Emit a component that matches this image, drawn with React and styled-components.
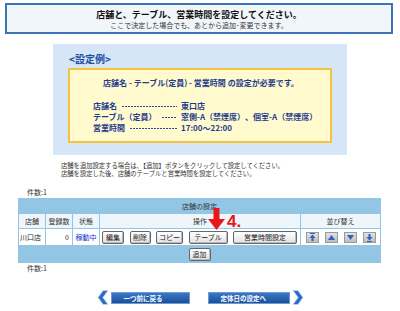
import styled, { createGlobalStyle } from 'styled-components';

const GlobalStyle = createGlobalStyle`
  body {
    margin: 0;
    background: #fff;
    font-family: "Noto Sans CJK JP", "Noto Sans", sans-serif;
    color: #222;
  }
`;

const Page = styled.div`
  width: 400px;
  height: 311px;
  overflow: hidden;
`;

const Header = styled.div`
  margin: 3px 7px 0 5px;
  height: 31px;
  box-sizing: border-box;
  border: 2px solid #3b73b9;
  background: #f1f6fb;
  padding-top: 4px;
  text-align: center;
`;

const HeaderTitle = styled.div`
  font-size: 9px;
  line-height: 11px;
  font-weight: bold;
  color: #111;
`;

const HeaderSub = styled.div`
  margin-top: 1px;
  font-size: 7px;
  line-height: 9px;
  color: #333;
`;

const ExamplePanel = styled.div`
  margin: 10px 0 0 53px;
  width: 294px;
  height: 111px;
  box-sizing: border-box;
  background: #d6e6f6;
  padding: 9px 15px 0;
`;

const ExampleLabel = styled.div`
  padding-left: 1px;
  font-size: 10px;
  line-height: 12px;
  font-weight: bold;
  color: #1d4fa1;
`;

const YellowBox = styled.div`
  margin-top: 3px;
  height: 75px;
  box-sizing: border-box;
  border: 2px solid #f5c33b;
  background: #fffbcf;
  padding: 8px 0 0 23px;
  color: #1f3c8c;
  font-weight: bold;
  font-size: 8px;
`;

const Lead = styled.div`
  margin-left: -21px;
  text-align: center;
  line-height: 10px;
`;

const SpecList = styled.div`
  margin-top: 12px;
`;

const SpecRow = styled.div`
  display: flex;
  align-items: center;
  line-height: 11px;
  white-space: nowrap;
`;

const SpecLabel = styled.div`
  display: flex;
  align-items: center;
  width: 84px;
  margin-right: 4px;
`;

const Leader = styled.span`
  flex: 1;
  height: 1px;
  margin: 1px 0 0 5px;
  background: repeating-linear-gradient(90deg, #2a4896 0 2px, transparent 2px 3px);
`;

const Notes = styled.div`
  margin: 7px 0 0 61px;
  font-size: 6.3px;
  line-height: 8px;
  color: #333;
`;

const Count = styled.div`
  margin: ${(p) => (p.first ? '9px' : '0')} 0 0 27px;
  font-size: 7px;
  line-height: 10px;
  color: #333;
`;

const TableWrap = styled.div`
  position: relative;
  margin: 1px 0 0 18px;
  width: 363px;
`;

const Grid = styled.table`
  width: 363px;
  table-layout: fixed;
  border-collapse: separate;
  border-spacing: 1px;
  background: #92c6e4;
  font-size: 7px;
  color: #333;
`;

const Caption = styled.td`
  height: 14px;
  padding: 0;
  text-align: center;
  color: #333;
`;

const Head = styled.td`
  height: 14px;
  padding: 0;
  background: #eef6fc;
  text-align: center;
`;

const Cell = styled.td`
  height: 16px;
  padding: 0 ${(p) => (p.right ? '3px' : '1px')};
  background: #fff;
  text-align: ${(p) => (p.right ? 'right' : p.center ? 'center' : 'left')};
  color: ${(p) => (p.status ? '#1a2fd0' : '#222')};
`;

const Foot = styled.td`
  height: 16px;
  padding: 0;
  text-align: center;
`;

const Actions = styled.div`
  display: flex;
  align-items: center;
  gap: 5.5px;
  padding-left: 1px;
`;

const Btn = styled.button`
  width: ${(p) => p.w}px;
  height: 13px;
  padding: 0;
  box-sizing: border-box;
  border: 1px solid #666;
  border-radius: 2px;
  background: linear-gradient(#ffffff, #e2e2e2);
  box-shadow: inset -1px -1px 0 #bbb;
  font-family: inherit;
  font-size: 7px;
  line-height: 11px;
  color: #222;
`;

const SortGroup = styled.div`
  display: flex;
  justify-content: center;
  gap: 6px;
`;

const SortBtn = styled.div`
  width: 13px;
  height: 11px;
  box-sizing: border-box;
  border: 1px solid #9a9a9a;
  background: linear-gradient(#e2e2e2, #bdbdbd);
  display: flex;
  align-items: center;
  justify-content: center;
`;

const Marker = styled.svg`
  position: absolute;
  left: 190px;
  top: 10px;
`;

const StepNo = styled.div`
  position: absolute;
  left: 209px;
  top: 15px;
  font-family: "Liberation Sans", Arial, sans-serif;
  font-size: 17px;
  line-height: 17px;
  font-weight: bold;
  color: #e8161b;
`;

const Nav = styled.div`
  margin-top: 17px;
  display: flex;
  justify-content: center;
  gap: 18px;
`;

const NavButton = styled.div`
  display: flex;
  align-items: center;
  gap: 2px;
`;

const NavBar = styled.div`
  width: ${(p) => p.w}px;
  height: 12px;
  box-sizing: border-box;
  border: 1px solid #6d9ad6;
  background: linear-gradient(#3a78c8, #1a5099);
  color: #fff;
  font-size: 6.5px;
  font-weight: bold;
  line-height: 10px;
  padding-left: ${(p) => p.pad}px;
`;

const Chevron = ({ dir }) => (
  <svg width="12" height="15" viewBox="0 0 12 15">
    <polygon
      points={dir === 'left' ? '11,0.5 6,7.5 11,14.5 6,14.5 1,7.5 6,0.5' : '1,0.5 6,7.5 1,14.5 6,14.5 11,7.5 6,0.5'}
      fill="#2e6cc4"
      stroke="#bcd4f0"
      strokeWidth="1"
      strokeLinejoin="round"
    />
  </svg>
);

const SortIcon = ({ kind }) => {
  const c = '#2d62c0';
  if (kind === 'up') return <svg width="7" height="5"><polygon points="3.5,0 7,5 0,5" fill={c} /></svg>;
  if (kind === 'down') return <svg width="7" height="5"><polygon points="0,0 7,0 3.5,5" fill={c} /></svg>;
  const top = kind === 'top';
  return (
    <svg width="7" height="9" viewBox="0 0 7 9">
      <rect x="1" y={top ? 0 : 8} width="5" height="1" fill={c} />
      <polygon points={top ? '3.5,1.5 6.5,5 0.5,5' : '0.5,4 6.5,4 3.5,7.5'} fill={c} />
      <rect x="2.5" y={top ? 5 : 1} width="2" height="3" fill={c} />
    </svg>
  );
};

export default function App() {
  return (
    <Page>
      <GlobalStyle />
      <Header>
        <HeaderTitle>店舗と、テーブル、営業時間を設定してください。</HeaderTitle>
        <HeaderSub>ここで決定した場合でも、あとから追加･変更できます。</HeaderSub>
      </Header>

      <ExamplePanel>
        <ExampleLabel>&lt;設定例&gt;</ExampleLabel>
        <YellowBox>
          <Lead>店舗名 - テーブル(定員) - 営業時間 の設定が必要です。</Lead>
          <SpecList>
            <SpecRow>
              <SpecLabel>店舗名<Leader /></SpecLabel>
              東口店
            </SpecRow>
            <SpecRow>
              <SpecLabel>テーブル（定員）<Leader /></SpecLabel>
              窓側-A（禁煙席）、個室-A（禁煙席）
            </SpecRow>
            <SpecRow>
              <SpecLabel>営業時間<Leader /></SpecLabel>
              17:00～22:00
            </SpecRow>
          </SpecList>
        </YellowBox>
      </ExamplePanel>

      <Notes>
        店舗を追加設定する場合は、【追加】ボタンをクリックして設定してください。
        <br />
        店舗を設定した後、店舗のテーブルと営業時間を設定してください。
      </Notes>

      <Count first>件数:1</Count>

      <TableWrap>
        <Grid>
          <colgroup>
            <col style={{ width: 26 }} />
            <col style={{ width: 26 }} />
            <col style={{ width: 26 }} />
            <col style={{ width: 200 }} />
            <col style={{ width: 79 }} />
          </colgroup>
          <tbody>
            <tr>
              <Caption colSpan={5}>店舗の設定</Caption>
            </tr>
            <tr>
              <Head>店舗</Head>
              <Head>登録数</Head>
              <Head>状態</Head>
              <Head>操作</Head>
              <Head>並び替え</Head>
            </tr>
            <tr>
              <Cell>川口店</Cell>
              <Cell right>0</Cell>
              <Cell center status>稼動中</Cell>
              <Cell>
                <Actions>
                  <Btn w={22}>編集</Btn>
                  <Btn w={21}>削除</Btn>
                  <Btn w={27}>コピー</Btn>
                  <Btn w={39}>テーブル</Btn>
                  <Btn w={64}>営業時間設定</Btn>
                </Actions>
              </Cell>
              <Cell>
                <SortGroup>
                  <SortBtn><SortIcon kind="top" /></SortBtn>
                  <SortBtn><SortIcon kind="up" /></SortBtn>
                  <SortBtn><SortIcon kind="down" /></SortBtn>
                  <SortBtn><SortIcon kind="bottom" /></SortBtn>
                </SortGroup>
              </Cell>
            </tr>
            <tr>
              <Foot colSpan={5}>
                <Btn w={22}>追加</Btn>
              </Foot>
            </tr>
          </tbody>
        </Grid>
        <Marker width="17" height="22" viewBox="0 0 17 22">
          <rect x="5.5" y="0" width="6" height="12" fill="#e8161b" />
          <polygon points="0,11 17,11 8.5,22" fill="#e8161b" />
        </Marker>
        <StepNo>4.</StepNo>
      </TableWrap>

      <Count>件数:1</Count>

      <Nav>
        <NavButton>
          <Chevron dir="left" />
          <NavBar w={79} pad={12}>一つ前に戻る</NavBar>
        </NavButton>
        <NavButton>
          <NavBar w={82} pad={12}>定体日の設定へ</NavBar>
          <Chevron dir="right" />
        </NavButton>
      </Nav>
    </Page>
  );
}
